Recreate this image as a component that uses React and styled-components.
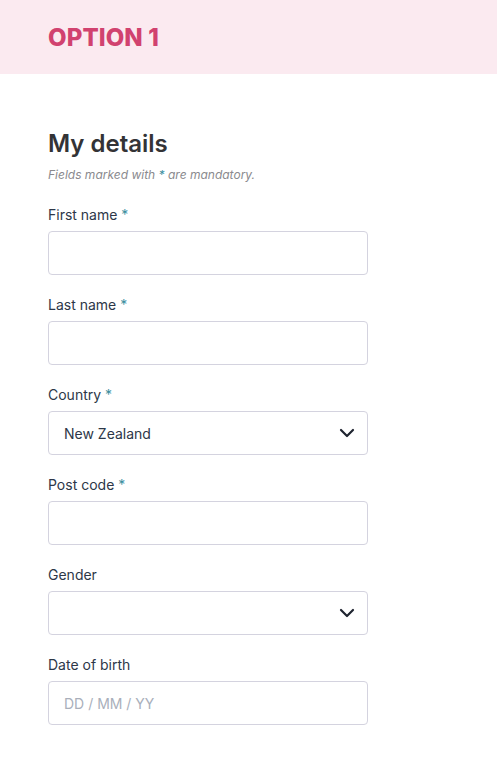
import React from 'react';
import styled, { createGlobalStyle } from 'styled-components';

const GlobalStyle = createGlobalStyle`
  * { box-sizing: border-box; }
  body {
    margin: 0;
    background: #fff;
    font-family: Inter, "Noto Sans", sans-serif;
    color: #2d3748;
  }
`;

const Banner = styled.header`
  height: 74px;
  background: #fbeaf0;
  display: flex;
  align-items: center;
  padding-left: 48px;
`;

const BannerTitle = styled.h1`
  margin: 0;
  font-size: 24px;
  font-weight: 800;
  color: #d1426f;
  letter-spacing: 0.1px;
`;

const Form = styled.form`
  padding: 55px 48px 40px;
  width: 416px;
`;

const Heading = styled.h2`
  margin: 0;
  font-size: 24px;
  line-height: 30px;
  font-weight: 600;
  color: #333336;
`;

const Note = styled.p`
  margin: 8px 0 22px;
  font-size: 12px;
  line-height: 16px;
  font-style: italic;
  color: #8a8a8e;
`;

const Star = styled.span`
  color: #3b8e9e;
`;

const Field = styled.div`
  display: flex;
  flex-direction: column;
  gap: 6px;
  margin-bottom: 20px;
`;

const Label = styled.label`
  font-size: 14px;
  line-height: 20px;
  color: #2d3748;
`;

const boxStyles = `
  width: 320px;
  height: 44px;
  border: 1px solid #d4d3df;
  border-radius: 4px;
  background: #fff;
  padding: 0 16px 0 15px;
  font-family: Inter, "Noto Sans", sans-serif;
  font-size: 14px;
  color: #2d3748;
  outline: none;
`;

const TextInput = styled.input`
  ${boxStyles}
  &::placeholder { color: #a9afbb; }
`;

const SelectWrap = styled.div`
  position: relative;
  width: 320px;
`;

const Select = styled.select`
  ${boxStyles}
  appearance: none;
  -webkit-appearance: none;
`;

const Chevron = styled.svg`
  position: absolute;
  right: 13px;
  top: 50%;
  transform: translateY(-50%);
  pointer-events: none;
`;

const ChevronIcon = () => (
  <Chevron width="16" height="10" viewBox="0 0 16 10" fill="none">
    <path d="M2 2 L8 8 L14 2" stroke="#1f2430" strokeWidth="2.2" strokeLinecap="round" strokeLinejoin="round" />
  </Chevron>
);

const TextField = ({ label, required, placeholder }) => (
  <Field>
    <Label>
      {label}
      {required && <Star> *</Star>}
    </Label>
    <TextInput placeholder={placeholder} />
  </Field>
);

const SelectField = ({ label, required, value, options }) => (
  <Field>
    <Label>
      {label}
      {required && <Star> *</Star>}
    </Label>
    <SelectWrap>
      <Select defaultValue={value}>
        {options.map((o) => (
          <option key={o} value={o}>{o}</option>
        ))}
      </Select>
      <ChevronIcon />
    </SelectWrap>
  </Field>
);

export default function App() {
  return (
    <>
      <GlobalStyle />
      <Banner>
        <BannerTitle>OPTION 1</BannerTitle>
      </Banner>
      <Form>
        <Heading>My details</Heading>
        <Note>
          Fields marked with <Star>*</Star> are mandatory.
        </Note>
        <TextField label="First name" required />
        <TextField label="Last name" required />
        <SelectField label="Country" required value="New Zealand" options={['New Zealand', 'Australia']} />
        <TextField label="Post code" required />
        <SelectField label="Gender" value="" options={['', 'Female', 'Male', 'Other']} />
        <TextField label="Date of birth" placeholder="DD / MM / YY" />
      </Form>
    </>
  );
}
